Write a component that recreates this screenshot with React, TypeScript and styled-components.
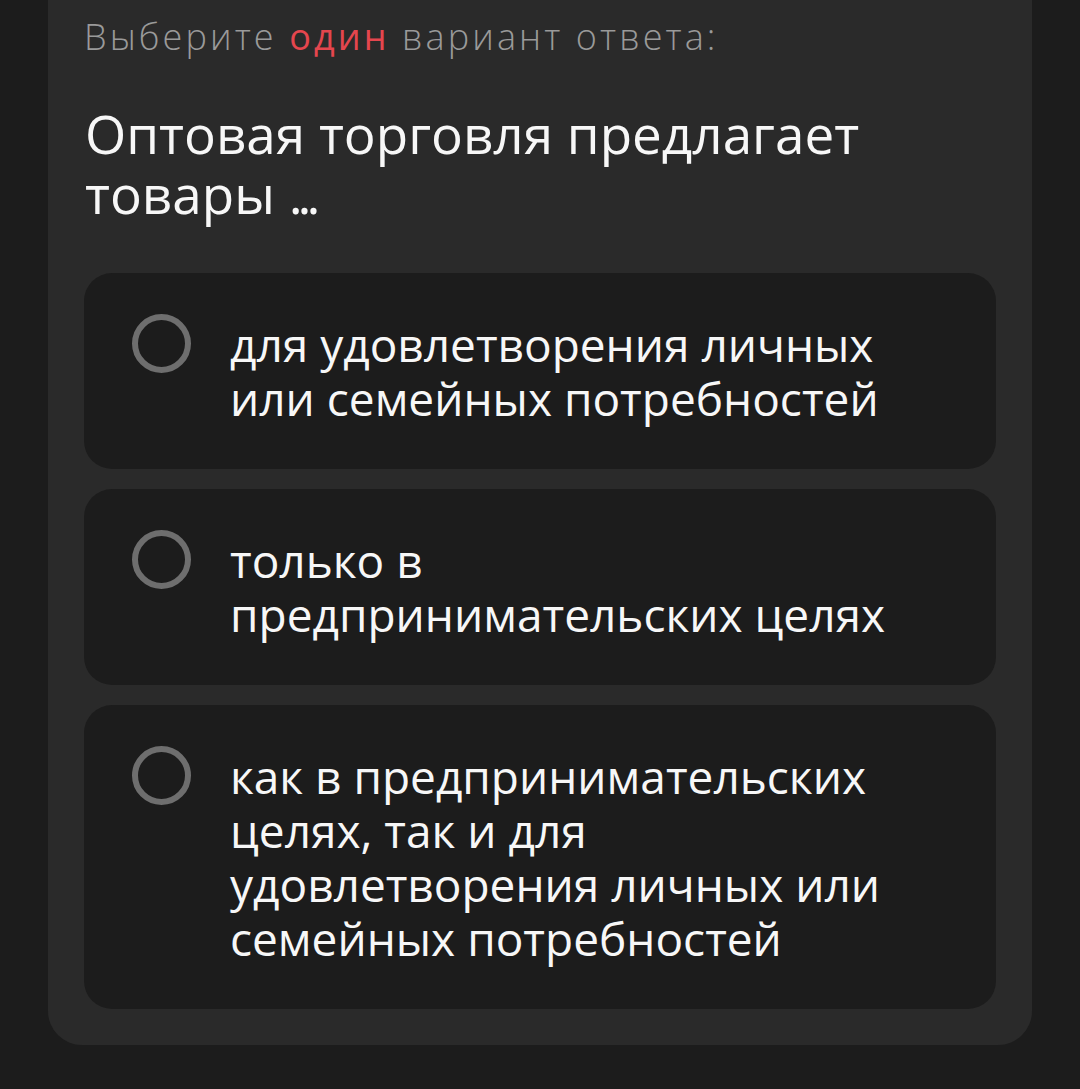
import React from "react";
import styled, { createGlobalStyle } from "styled-components";

const GlobalStyle = createGlobalStyle`
  html, body {
    margin: 0;
    padding: 0;
    background: #1c1c1c;
  }
  * { box-sizing: border-box; }
`;

const Page = styled.div`
  min-height: 100vh;
  background: #1c1c1c;
  padding: 0 48px 44px;
  font-family: "Open Sans", "Liberation Sans", sans-serif;
`;

const Card = styled.section`
  background: #2a2a2a;
  border-radius: 0 0 34px 34px;
  padding: 12px 36px 36px;
`;

const Instruction = styled.p`
  margin: 0;
  font-size: 36px;
  line-height: 50px;
  font-weight: 300;
  letter-spacing: 3.1px;
  color: #9a9a9a;
`;

const Accent = styled.span`
  color: #e5464e;
  font-weight: 400;
`;

const Question = styled.h2`
  margin: 42px 0 0 1px;
  font-size: 53px;
  line-height: 60px;
  font-weight: 400;
  color: #f7f7f7;
`;

/* tight trailing dots after the question */
const Dots = styled.span`
  letter-spacing: -5px;
`;

const Options = styled.div`
  display: flex;
  flex-direction: column;
  gap: 20px;
  margin-top: 49px;
`;

const Option = styled.label`
  display: flex;
  align-items: flex-start;
  gap: 39px;
  padding: 44px 76px 44px 48px;
  background: #1c1c1c;
  border-radius: 28px;
  cursor: pointer;
`;

const Radio = styled.span`
  flex: none;
  width: 59px;
  height: 59px;
  margin-top: -3px;
  border: 6px solid #6e6e6e;
  border-radius: 50%;
`;

const OptionText = styled.span`
  font-size: 46px;
  line-height: 54px;
  color: #f7f7f7;
`;

const answers = [
  "для удовлетворения личных или семейных потребностей",
  "только в предпринимательских целях",
  "как в предпринимательских целях, так и для удовлетворения личных или семейных потребностей",
];

export default function App() {
  return (
    <>
      <GlobalStyle />
      <Page>
        <Card>
          <Instruction>
            Выберите <Accent>один</Accent> вариант ответа:
          </Instruction>
          <Question>
            Оптовая торговля предлагает товары <Dots>...</Dots>
          </Question>
          <Options>
            {answers.map((a) => (
              <Option key={a}>
                <Radio />
                <OptionText>{a}</OptionText>
              </Option>
            ))}
          </Options>
        </Card>
      </Page>
    </>
  );
}
